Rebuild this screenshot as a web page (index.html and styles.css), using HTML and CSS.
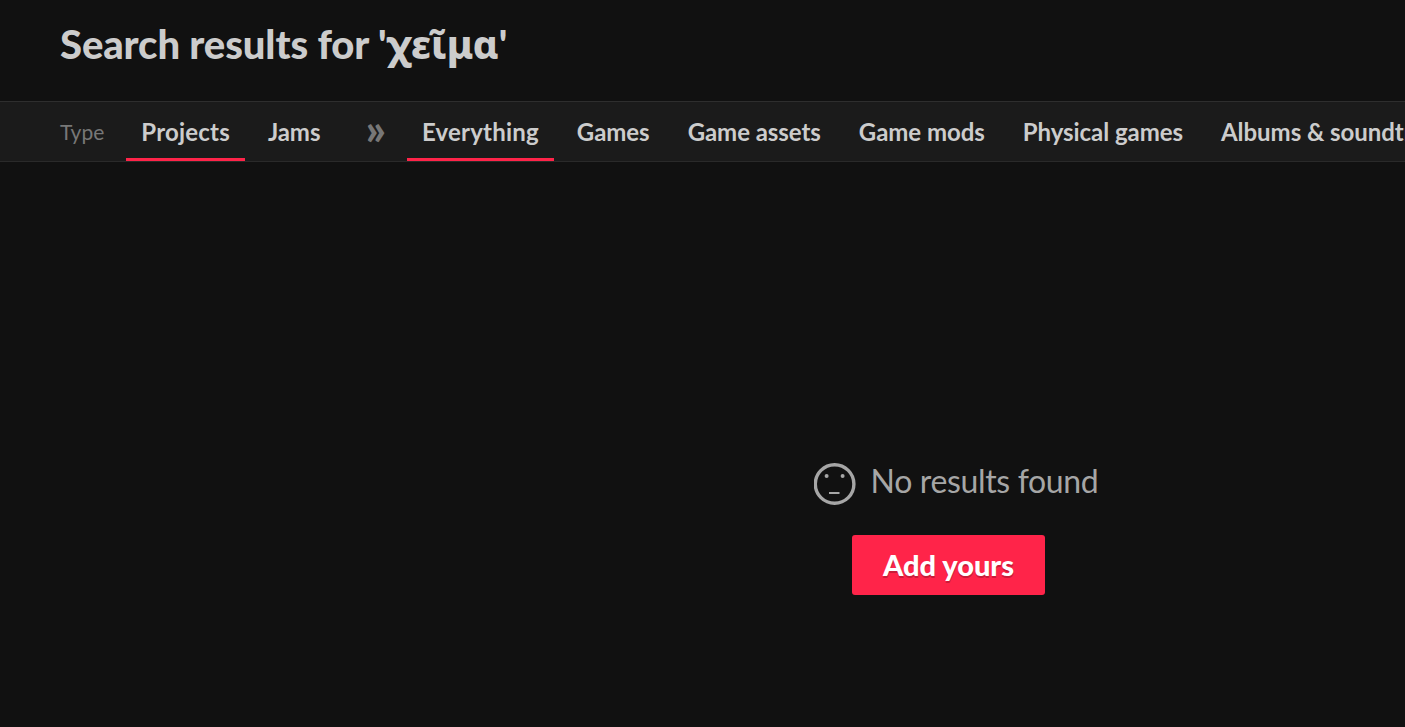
FILE: index.html
```html
<!DOCTYPE html>
<html lang="en">
<head>
    <meta charset="UTF-8">
    <meta name="viewport" content="width=device-width, initial-scale=1.0">
    <title>Search results</title>
    <link rel="stylesheet" href="styles.css">
</head>
<body>
    <div class="page">
        <div class="header">
            <h2>Search results for '<span class="greek">χεῖμα</span>'</h2>
        </div>

        <div class="filter-bar">
            <span class="filter-label">Type</span>
            <a class="tab active" href="#">Projects</a>
            <a class="tab" href="#">Jams</a>
            <span class="separator">»</span>
            <a class="tab active" href="#">Everything</a>
            <a class="tab" href="#">Games</a>
            <a class="tab" href="#">Game assets</a>
            <a class="tab" href="#">Game mods</a>
            <a class="tab" href="#">Physical games</a>
            <a class="tab" href="#">Albums &amp; soundtracks</a>
        </div>

        <div class="empty-results">
            <div class="empty-message">
                <svg class="empty-icon" viewBox="0 0 42 42" width="42" height="42" aria-hidden="true">
                    <circle cx="20.6" cy="21" r="19.3" fill="none" stroke="currentColor" stroke-width="3.4"></circle>
                    <circle cx="12.6" cy="13" r="2" fill="currentColor"></circle>
                    <circle cx="28.6" cy="13" r="2" fill="currentColor"></circle>
                    <path d="M15 30H25.5" fill="none" stroke="currentColor" stroke-width="2"></path>
                </svg>
                <span>No results found</span>
            </div>
            <a class="add-button" href="#">Add yours</a>
        </div>
    </div>
</body>
</html>
```

FILE: styles.css
```css
html, body {
    height: 100%;
}

body {
    margin: 0;
    overflow: hidden;
    background-color: #111111;
    color: #cccccc;
    font-family: 'Lato', 'Liberation Serif', serif;
}

.page {
    width: 1897px;
}

.header {
    padding: 19px 60px 0;
    height: 101px;
    box-sizing: border-box;
}

.header h2 {
    margin: 0;
    font-size: 40px;
    line-height: 50px;
    font-weight: 900;
    letter-spacing: -0.1px;
}

.greek {
    font-family: 'Noto Sans', sans-serif;
    font-size: 39px;
    font-weight: 800;
}

.filter-bar {
    display: flex;
    align-items: stretch;
    gap: 8px;
    height: 59px;
    padding-left: 60px;
    background-color: #1b1b1b;
    border-top: 1px solid #2e2e2e;
    border-bottom: 1px solid #2a2a2a;
    font-size: 24px;
    white-space: nowrap;
}

.filter-label {
    margin-right: 14px;
    color: #777777;
    font-size: 21px;
    line-height: 59px;
}

.tab {
    padding: 0 15px;
    color: #cccccc;
    font-weight: 700;
    line-height: 59px;
    letter-spacing: -0.05px;
    text-decoration: none;
}

.tab.active {
    letter-spacing: 0.2px;
    box-shadow: inset 0 -3px 0 #ff2449;
}

.separator {
    margin: 0 13px 0 22px;
    color: #777777;
    font-size: 44px;
    font-weight: 900;
    line-height: 52px;
}

.empty-results {
    display: flex;
    flex-direction: column;
    align-items: center;
    padding-top: 298px;
}

.empty-message {
    display: flex;
    align-items: flex-start;
    gap: 15px;
    padding-left: 15px;
    color: #a6a6a6;
    font-size: 32px;
    line-height: 42px;
    letter-spacing: -0.35px;
}

.empty-icon {
    display: block;
    margin-top: 3px;
}

.add-button {
    display: block;
    margin-top: 30px;
    padding: 0 31px;
    height: 60px;
    line-height: 60px;
    background-color: #ff2449;
    border-radius: 3px;
    color: #ffffff;
    font-size: 29px;
    font-weight: 900;
    text-decoration: none;
    text-shadow: 0 2px 0 #c91c39;
}
```
